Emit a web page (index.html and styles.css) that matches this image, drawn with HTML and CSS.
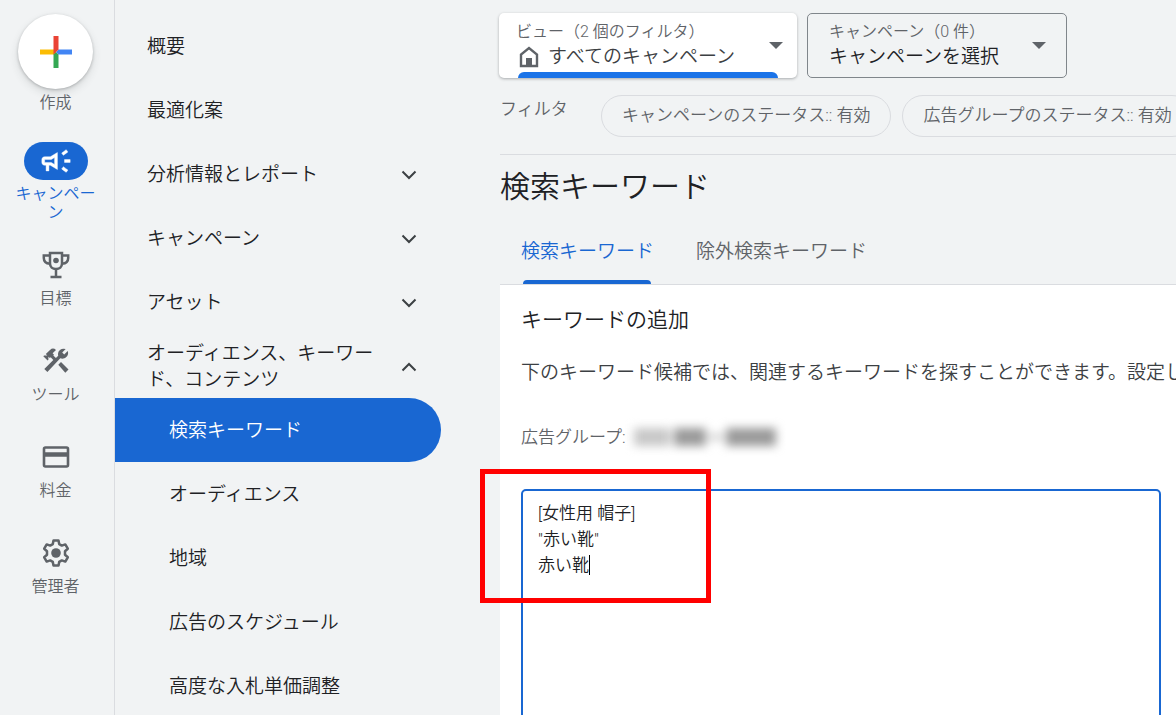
FILE: index.html
```html
<!DOCTYPE html>
<html lang="ja">
<head>
    <meta charset="UTF-8">
    <meta name="viewport" content="width=device-width, initial-scale=1.0">
    <title>検索キーワード</title>
    <link rel="stylesheet" href="styles.css">
</head>
<body>
    <div class="app">
        <nav class="rail">
            <button type="button" class="rail-item create">
                <span class="create-circle">
                    <svg width="32" height="32" viewBox="0 0 32 32">
                        <path fill="#fbbc04" d="M0 13.5h16v5H0z"/>
                        <path fill="#34a853" d="M13.5 18.5L16 16l2.5 2.5V32h-5z"/>
                        <path fill="#4285f4" d="M18.500 13.500H32v5H18.500L16 16z"/>
                        <path fill="#ea4335" d="M13.500 0h5v13.500L13.500 18.500z"/>
                    </svg>
                </span>
                <span class="rail-label">作成</span>
            </button>
            <a href="#" class="rail-item current">
                <span class="rail-icon">
                    <svg width="34" height="34" viewBox="0 0 24 24" fill="currentColor" stroke="currentColor" stroke-width="0.3">
                        <path d="M18 11v2h4v-2h-4zm-2 6.610c.96.71 2.210 1.650 3.200 2.390.4-.53.8-1.070 1.200-1.600-.99-.74-2.240-1.680-3.200-2.400-.4.540-.8 1.080-1.200 1.610zM20.400 5.600c-.4-.53-.8-1.070-1.200-1.600-.99.740-2.240 1.680-3.200 2.400.4.530.8 1.070 1.200 1.600.96-.72 2.210-1.650 3.200-2.400zM4 9c-1.100 0-2 .9-2 2v2c0 1.100.9 2 2 2h1v4h2v-4h1l5 3V6L8 9H4zm5.030 1.710L11 9.530v4.940l-1.970-1.180-.48-.290H4v-2h4.550l.48-.29z"/>
                    </svg>
                </span>
                <span class="rail-label">キャンペーン</span>
            </a>
            <a href="#" class="rail-item">
                <span class="rail-icon">
                    <svg width="28" height="28" viewBox="0 0 28 28" fill="none" stroke="currentColor" stroke-width="2.500">
                        <path d="M8 2h12v10.500c0 3.500-2.500 5.500-6 5.500s-6-2-6-5.500z"/>
                        <path d="M8 4.500H1.800v2.500c0 3.500 2.500 5.500 6.200 5.800M20 4.500h6.200v2.500c0 3.500-2.500 5.500-6.200 5.800M14 18v7.500M8.500 26h11"/>
                        <circle cx="14" cy="9.500" r="2.800" fill="currentColor" stroke="none"/>
                    </svg>
                </span>
                <span class="rail-label">目標</span>
            </a>
            <a href="#" class="rail-item">
                <span class="rail-icon">
                    <svg width="28" height="28" viewBox="0 0 28 28" fill="currentColor">
                        <path d="M16.300 17.700l2.700-2.700 7.500 7.500-3.200 3.200z"/>
                        <path d="M20.500 11.700a5.600 5.600 0 0 0 5.200-7.600l-3.500 3.500-2-2 3.500-3.500a5.600 5.600 0 0 0-7.500 6.600l-2.300 2.300-2.600-2.600.7-.7-1.400-1.400 3.400-3.400a4.300 4.300 0 0 0-6 0L3.800 7l1.500 1.500H2.100l-.8.800 4.300 4.200.8-.8V9.700l1.500 1.400.8-.8 2.600 2.600-9 9 3.100 3.100L18.300 11.300c.7.300 1.400.4 2.200.4z"/>
                    </svg>
                </span>
                <span class="rail-label">ツール</span>
            </a>
            <a href="#" class="rail-item">
                <span class="rail-icon">
                    <svg width="28" height="28" viewBox="0 0 28 28" fill="none" stroke="currentColor" stroke-width="2.600">
                        <rect x="2" y="4.500" width="24" height="19" rx="1.500"/>
                        <path d="M2 11.500h24" stroke-width="4.500"/>
                    </svg>
                </span>
                <span class="rail-label">料金</span>
            </a>
            <a href="#" class="rail-item">
                <span class="rail-icon">
                    <svg width="28" height="28" viewBox="0 0 28 28" fill="none" stroke="currentColor" stroke-width="2.500" stroke-linejoin="round">
                        <path d="M11.500 1.500h5l.7 3.600 2.600 1.500 3.500-1.200 2.500 4.300-2.800 2.500v3.600l2.800 2.500-2.500 4.300-3.500-1.200-2.600 1.500-.7 3.600h-5l-.7-3.600-2.600-1.500-3.500 1.200-2.500-4.300L5 15.800v-3.600L2.200 9.700l2.500-4.300 3.500 1.200 2.600-1.500z"/>
                        <circle cx="14" cy="14" r="4.800" fill="currentColor" stroke="none"/>
                    </svg>
                </span>
                <span class="rail-label">管理者</span>
            </a>
        </nav>

        <nav class="menu">
            <a href="#" class="menu-item">概要</a>
            <a href="#" class="menu-item">最適化案</a>
            <button type="button" class="menu-item">
                <span>分析情報とレポート</span>
                <svg class="chevron" width="16" height="10" viewBox="0 0 16 10"><path d="M1.500 1.500L8 8l6.500-6.500"/></svg>
            </button>
            <button type="button" class="menu-item">
                <span>キャンペーン</span>
                <svg class="chevron" width="16" height="10" viewBox="0 0 16 10"><path d="M1.500 1.500L8 8l6.500-6.500"/></svg>
            </button>
            <button type="button" class="menu-item">
                <span>アセット</span>
                <svg class="chevron" width="16" height="10" viewBox="0 0 16 10"><path d="M1.500 1.500L8 8l6.500-6.500"/></svg>
            </button>
            <button type="button" class="menu-item" aria-expanded="true">
                <span>オーディエンス、キーワード、コンテンツ</span>
                <svg class="chevron" width="16" height="10" viewBox="0 0 16 10"><path d="M1.500 8.500L8 2l6.500 6.500"/></svg>
            </button>
            <a href="#" class="menu-item sub selected">検索キーワード</a>
            <a href="#" class="menu-item sub">オーディエンス</a>
            <a href="#" class="menu-item sub">地域</a>
            <a href="#" class="menu-item sub">広告のスケジュール</a>
            <a href="#" class="menu-item sub">高度な入札単価調整</a>
        </nav>

        <main class="main">
            <div class="pickers">
                <div class="picker view">
                    <div class="picker-body">
                        <label for="view">ビュー（2 個のフィルタ）</label>
                        <div class="picker-row">
                            <svg width="20" height="22" viewBox="0 0 20 22">
                                <path d="M2 20V8.500L10 2l8 6.500V20z" fill="none" stroke="#5f6368" stroke-width="2.400"/>
                                <path d="M7 12h6v8H7z" fill="#5f6368"/>
                            </svg>
                            <select id="view"><option>すべてのキャンペーン</option></select>
                        </div>
                    </div>
                    <span class="arrow"></span>
                </div>
                <div class="picker campaign">
                    <div class="picker-body">
                        <label for="campaign">キャンペーン（0 件）</label>
                        <div class="picker-row">
                            <select id="campaign"><option>キャンペーンを選択</option></select>
                        </div>
                    </div>
                    <span class="arrow"></span>
                </div>
            </div>

            <div class="filters">
                <span class="filters-label">フィルタ</span>
                <button type="button" class="chip">キャンペーンのステータス:: 有効</button>
                <button type="button" class="chip">広告グループのステータス:: 有効</button>
            </div>

            <h1>検索キーワード</h1>
            <div class="tabs">
                <a href="#" class="tab active">検索キーワード</a>
                <a href="#" class="tab">除外検索キーワード</a>
            </div>

            <section class="panel">
                <h2>キーワードの追加</h2>
                <p class="description">下のキーワード候補では、関連するキーワードを探すことができます。設定し</p>
                <p class="ad-group">広告グループ: <span class="masked"><i class="light"></i><i></i><i class="dash"></i><i class="wide"></i></span></p>
                <div class="keywords">
                    <textarea aria-label="キーワード">[女性用 帽子]
"赤い靴"
赤い靴</textarea>
                    <span class="caret"></span>
                    <div class="highlight"></div>
                </div>
            </section>
        </main>
    </div>
</body>
</html>
```

FILE: styles.css
```css
* {
    box-sizing: border-box;
}
body {
    margin: 0;
    font-family: Roboto, "Noto Sans CJK JP", sans-serif;
    font-size: 19px;
    font-weight: 350;
    color: #202124;
    background: #f1f3f4;
}
a {
    color: inherit;
    text-decoration: none;
}
button, select, textarea {
    font: inherit;
    color: inherit;
}
button {
    padding: 0;
    border: none;
    background: none;
    text-align: left;
    cursor: pointer;
}
.app {
    display: flex;
    height: 100vh;
    overflow: hidden;
}

/* left rail */
.rail {
    flex: none;
    display: flex;
    flex-direction: column;
    align-items: center;
    width: 115px;
    padding: 14px 14px 0 11px;
    border-right: 1px solid #dadce0;
}
.rail-item {
    display: flex;
    flex-direction: column;
    align-items: center;
    gap: 5px;
    width: 89px;
    margin-bottom: 34px;
    font-size: 16px;
    line-height: 19px;
    text-align: center;
    color: #5f6368;
}
.rail-item.create {
    gap: 4px;
    margin-bottom: 30px;
}
.rail-item.current {
    gap: 4px;
    margin-bottom: 24px;
    color: #1967d2;
}
.create-circle {
    display: flex;
    align-items: center;
    justify-content: center;
    width: 75px;
    height: 75px;
    border-radius: 50%;
    background: #fff;
    box-shadow: 0 1px 3px rgba(60, 64, 67, 0.3), 0 4px 8px rgba(60, 64, 67, 0.15);
}
.rail-icon {
    display: flex;
    align-items: center;
    justify-content: center;
    width: 64px;
    height: 38px;
    border-radius: 19px;
}
.current .rail-icon {
    color: #fff;
    background: #1967d2;
}

/* section menu */
.menu {
    flex: none;
    width: 326px;
    padding-top: 14px;
}
.menu-item {
    display: flex;
    align-items: center;
    justify-content: space-between;
    width: 100%;
    height: 64px;
    padding: 1px 24px 0 32px;
    line-height: 26px;
}
.menu-item span {
    width: 230px;
}
.menu-item.sub {
    padding-left: 54px;
}
.menu-item.selected {
    color: #fff;
    background: #1967d2;
    border-radius: 0 32px 32px 0;
}
.chevron {
    fill: none;
    stroke: #3c4043;
    stroke-width: 2;
}

/* main column */
.main {
    flex: 1;
    display: flex;
    flex-direction: column;
    min-width: 0;
    margin-left: 59px;
    padding-top: 13px;
}
.pickers {
    display: flex;
    gap: 10px;
    margin-left: -1px;
}
.picker {
    display: flex;
    align-items: center;
    justify-content: space-between;
    height: 65px;
    border-radius: 5px;
}
.picker.view {
    position: relative;
    width: 298px;
    padding: 0 14px 0 17px;
    background: #fff;
    box-shadow: 0 1px 3px rgba(60, 64, 67, 0.4);
}
.picker.view::after {
    content: "";
    position: absolute;
    left: 19px;
    right: 19px;
    bottom: 0;
    height: 6px;
    border-radius: 6px 6px 0 0;
    background: #1a73e8;
}
.picker.campaign {
    width: 260px;
    padding: 0 20px 0 21px;
    border: 1px solid #80868b;
}
.picker-body {
    display: flex;
    flex-direction: column;
    padding-bottom: 2px;
}
.picker label {
    font-size: 16px;
    line-height: 24px;
    color: #5f6368;
}
.picker-row {
    display: flex;
    align-items: center;
    gap: 9px;
    height: 26px;
    padding-left: 3px;
}
.campaign .picker-row {
    padding-left: 0;
}
.picker select {
    appearance: none;
    padding: 0;
    border: none;
    background: none;
    line-height: 26px;
}
.view select {
    color: #3c4043;
}
.arrow {
    border: 7px solid transparent;
    border-top-color: #5f6368;
    border-bottom: none;
}
.filters {
    display: flex;
    gap: 11px;
    padding: 17px 0;
    border-bottom: 1px solid #dadce0;
    font-size: 17px;
    color: #5f6368;
}
.filters-label {
    flex: none;
    width: 90px;
    line-height: 28px;
}
.chip {
    flex: none;
    height: 42px;
    padding: 0 20px 5px;
    border: 1px solid #dadce0;
    border-radius: 21px;
    white-space: nowrap;
}
h1 {
    margin: 0;
    padding: 12px 0;
    font-size: 30px;
    font-weight: inherit;
    line-height: 40px;
}
.tabs {
    display: flex;
    gap: 42px;
    padding-left: 21px;
    color: #5f6368;
}
.tab {
    position: relative;
    height: 65px;
    line-height: 65px;
}
.tab.active {
    color: #1967d2;
}
.tab.active::after {
    content: "";
    position: absolute;
    left: 2px;
    right: 3px;
    bottom: 0;
    height: 4px;
    border-radius: 4px 4px 0 0;
    background: #1967d2;
}
.panel {
    flex: 1;
    display: flex;
    flex-direction: column;
    padding: 20px 15px 0 21px;
    border-top: 1px solid #dadce0;
    background: #fff;
}
h2 {
    margin: 0 0 24px;
    font-size: 21px;
    font-weight: inherit;
    line-height: 30px;
}
.description {
    margin: 0 -15px 36px 0;
    line-height: 28px;
    color: #3c4043;
    white-space: nowrap;
    overflow: hidden;
}
.ad-group {
    display: flex;
    gap: 8px;
    margin: 0 0 38px;
    font-size: 17px;
    line-height: 28px;
    color: #5f6368;
}
.masked {
    display: flex;
    align-items: center;
    gap: 4px;
    filter: blur(5px);
}
.masked i {
    width: 32px;
    height: 18px;
    background: #9a9a9a;
}
.masked .light {
    width: 36px;
    background: #c8c8c8;
}
.masked .dash {
    width: 12px;
    height: 6px;
    background: #c8c8c8;
}
.masked .wide {
    width: 50px;
}
.keywords {
    position: relative;
    flex: 1;
    display: flex;
    min-height: 226px;
    margin-bottom: -10px;
}
textarea {
    flex: 1;
    padding: 9px 15px;
    border: 2px solid #1967d2;
    border-radius: 5px;
    outline: none;
    resize: none;
    font-size: 17px;
    line-height: 26px;
}
.caret {
    position: absolute;
    left: 68px;
    top: 66px;
    width: 1px;
    height: 20px;
    background: #000;
}
.highlight {
    position: absolute;
    left: -41px;
    top: -20px;
    width: 231px;
    height: 134px;
    border: 5px solid #f00;
    pointer-events: none;
}
```
